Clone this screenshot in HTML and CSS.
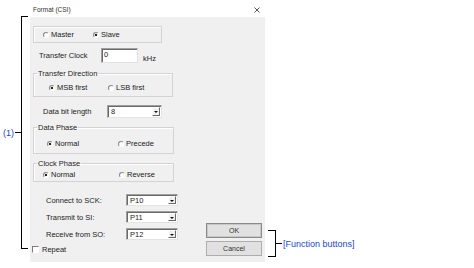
FILE: index.html
```html
<!DOCTYPE html>
<html lang="en">

<head>
    <meta charset="UTF-8">
    <title>Format (CSI)</title>
    <link rel="stylesheet" href="styles.css">
</head>

<body>
    <div class="page">
        <!-- Annotation (1) -->
        <div class="annot-left">
            <span class="annot-text num">(1)</span>
            <span class="tick"></span>
            <div class="bracket-left"></div>
        </div>

        <div class="dialog">
            <div class="titlebar">
                <span class="title">Format (CSI)</span>
                <svg class="close" width="6" height="6" viewBox="0 0 6 6">
                    <path d="M0.5 0.5 L5.5 5.5 M5.5 0.5 L0.5 5.5" stroke="#555" stroke-width="1" fill="none"/>
                </svg>
            </div>

            <div class="panel">
                <div class="controls">
                    <div class="group mode-group">
                        <div class="radio-row mode-row">
                            <label class="opt w-master"><span class="radio"></span>Master</label>
                            <label class="opt"><span class="radio on"></span>Slave</label>
                        </div>
                    </div>

                    <div class="row clock-row">
                        <span class="lbl w-clock">Transfer Clock</span>
                        <span class="textbox">0</span>
                        <span class="unit">kHz</span>
                    </div>

                    <fieldset class="group dir-group">
                        <legend>Transfer Direction</legend>
                        <div class="radio-row dir-row">
                            <label class="opt w-msb"><span class="radio on"></span>MSB first</label>
                            <label class="opt"><span class="radio"></span>LSB first</label>
                        </div>
                    </fieldset>

                    <div class="row bits-row">
                        <span class="lbl w-bits">Data bit length</span>
                        <span class="combo bits-combo"><span class="combo-val">8</span><span class="combo-btn"></span></span>
                    </div>

                    <fieldset class="group data-group">
                        <legend>Data Phase</legend>
                        <div class="radio-row data-row">
                            <label class="opt w-data"><span class="radio on"></span>Normal</label>
                            <label class="opt"><span class="radio"></span>Precede</label>
                        </div>
                    </fieldset>

                    <fieldset class="group clk-group">
                        <legend>Clock Phase</legend>
                        <div class="radio-row clk-row">
                            <label class="opt w-clk"><span class="radio on"></span>Normal</label>
                            <label class="opt"><span class="radio"></span>Reverse</label>
                        </div>
                    </fieldset>

                    <div class="pins">
                        <div class="row pin-row">
                            <span class="lbl w-pin">Connect to SCK:</span>
                            <span class="combo pin-combo"><span class="combo-val">P10</span><span class="combo-btn"></span></span>
                        </div>
                        <div class="row pin-row">
                            <span class="lbl w-pin">Transmit to SI:</span>
                            <span class="combo pin-combo"><span class="combo-val">P11</span><span class="combo-btn"></span></span>
                        </div>
                        <div class="row pin-row">
                            <span class="lbl w-pin">Receive from SO:</span>
                            <span class="combo pin-combo"><span class="combo-val">P12</span><span class="combo-btn"></span></span>
                        </div>
                    </div>

                    <label class="opt repeat"><span class="checkbox"></span>Repeat</label>
                </div>

                <div class="buttons">
                    <button class="btn btn-default">OK</button>
                    <button class="btn">Cancel</button>
                </div>
            </div>
        </div>

        <!-- Annotation [Function buttons] -->
        <div class="annot-right">
            <div class="bracket-right"></div>
            <span class="tick"></span>
            <span class="annot-text">[Function buttons]</span>
        </div>
    </div>
</body>

</html>
```

FILE: styles.css
```css
body {
    margin: 0;
    background: #fff;
    font-family: "Liberation Sans", Arial, sans-serif;
    font-size: 7.5px;
    color: #222;
}

.page {
    display: flex;
    align-items: flex-start;
}

/* Annotations */
.annot-text {
    font-size: 9px;
    color: #2349c6;
    white-space: nowrap;
}

.annot-left {
    display: flex;
    align-items: center;
    margin-top: 16px;
}

.annot-left .num {
    margin-left: 3px;
    width: 12px;
}

.tick {
    width: 6px;
    height: 1px;
    background: #000;
}

.bracket-left {
    width: 6px;
    height: 231px;
    border: 1px solid #000;
    border-right: 0;
}

.annot-right {
    display: flex;
    align-items: center;
    margin-top: 230px;
    margin-left: 2px;
}

.bracket-right {
    width: 7px;
    height: 25px;
    border: 1px solid #000;
    border-left: 0;
}

.annot-right .annot-text {
    margin-left: 1px;
}

/* Dialog */
.dialog {
    width: 236px;
    margin-left: 2px;
}

.titlebar {
    height: 17px;
    display: flex;
    align-items: center;
    justify-content: space-between;
    padding: 2px 6px 0 3px;
    box-sizing: border-box;
    background: #fff;
}

.title {
    font-size: 6.5px;
    color: #333;
}

.panel {
    width: 235px;
    height: 245px;
    background: #f0f0f0;
    display: flex;
    padding-left: 2px;
    box-sizing: border-box;
}

.controls {
    width: 147px;
    display: flex;
    flex-direction: column;
}

/* Group boxes */
.group {
    margin: 0 0 0 1px;
    padding: 0;
    border: 1px solid #d3d3d3;
    box-shadow: inset 1px 1px #fff;
    box-sizing: border-box;
}

.group legend {
    margin-left: 3px;
    padding: 0 1px;
    line-height: 9px;
}

.radio-row {
    display: flex;
    align-items: center;
    height: 9px;
}

.opt {
    display: flex;
    align-items: center;
    gap: 2px;
    white-space: nowrap;
}

.radio {
    width: 4px;
    height: 4px;
    border-radius: 50%;
    border: 1px solid;
    border-color: #8a8a8a #fff #fff #8a8a8a;
    background: #fff;
}

.radio.on {
    background: radial-gradient(circle, #222 0 1.3px, #fff 1.6px);
}

.checkbox {
    width: 5px;
    height: 5px;
    border: 1px solid;
    border-color: #7a7a7a #fff #fff #7a7a7a;
    background: #fff;
    margin-right: 3px;
}

.mode-group {
    width: 129px;
    height: 17px;
    margin-top: 9px;
    display: flex;
    align-items: center;
}

.mode-row {
    padding-left: 9px;
}

.w-master { width: 50px; }

.dir-group {
    width: 140px;
    margin-top: 6px;
}

.dir-row {
    margin-top: 5px;
    padding-left: 15px;
    margin-bottom: 4px;
}

.w-msb { width: 59px; }

.data-group {
    width: 141px;
    margin-top: 5px;
}

.data-row {
    margin-top: 7px;
    padding-left: 13px;
    margin-bottom: 5px;
}

.w-data { width: 71px; }

.clk-group {
    width: 141px;
    margin-top: 5px;
}

.clk-row {
    margin-top: 2px;
    padding-left: 9px;
    margin-bottom: 2px;
}

.w-clk { width: 76px; }

/* Label + field rows */
.row {
    display: flex;
    align-items: center;
}

.clock-row {
    margin-top: 5px;
    padding-left: 7px;
}

.w-clock { width: 62px; }

.textbox {
    width: 35px;
    height: 13px;
    padding-left: 2px;
    box-sizing: border-box;
    border: 1px solid;
    border-color: #a0a0a0 #e3e3e3 #e3e3e3 #a0a0a0;
    box-shadow: inset 1px 1px #696969;
    background: #fff;
    width: 37px;
    height: 15px;
    line-height: 10px;
    padding-top: 1px;
}

.unit {
    align-self: flex-end;
    margin-left: 5px;
    line-height: 9px;
}

.bits-row {
    margin-top: 8px;
    padding-left: 11px;
}

.w-bits { width: 64px; }

.combo {
    display: flex;
    height: 12px;
    box-sizing: border-box;
    border: 1px solid;
    border-color: #a0a0a0 #e3e3e3 #e3e3e3 #a0a0a0;
    box-shadow: inset 1px 1px #696969;
    background: #fff;
}

.combo-val {
    flex: 1;
    padding: 1px 0 0 3px;
    line-height: 9px;
}

.combo-btn {
    width: 6px;
    margin: 1px 1px 1px 0;
    background: #f0f0f0;
    border: 1px solid;
    border-color: #fff #6a6a6a #6a6a6a #fff;
    position: relative;
}

.combo-btn::after {
    content: "";
    position: absolute;
    left: 1px;
    top: 3px;
    border-left: 2px solid transparent;
    border-right: 2px solid transparent;
    border-top: 2px solid #111;
}

.bits-combo {
    width: 55px;
    height: 13px;
}

.pins {
    display: flex;
    flex-direction: column;
    gap: 5px;
    margin-top: 12px;
}

.pin-row {
    padding-left: 14px;
}

.w-pin { width: 80px; }

.pin-combo {
    width: 52px;
}

.repeat {
    margin-top: 5px;
    height: 9px;
    gap: 0;
}

/* Buttons */
.buttons {
    display: flex;
    flex-direction: column;
    gap: 3px;
    margin-top: 206px;
    margin-left: 27px;
}

.btn {
    width: 56px;
    height: 15px;
    padding: 0;
    font-family: "Liberation Sans", Arial, sans-serif;
    font-size: 7px;
    color: #333;
    background: #e1e1e1;
    border: 1px solid #adadad;
}

.btn-default {
    border-color: #8a8a8a;
    box-shadow: inset 0 0 0 1px #c8c8c8;
}
```
